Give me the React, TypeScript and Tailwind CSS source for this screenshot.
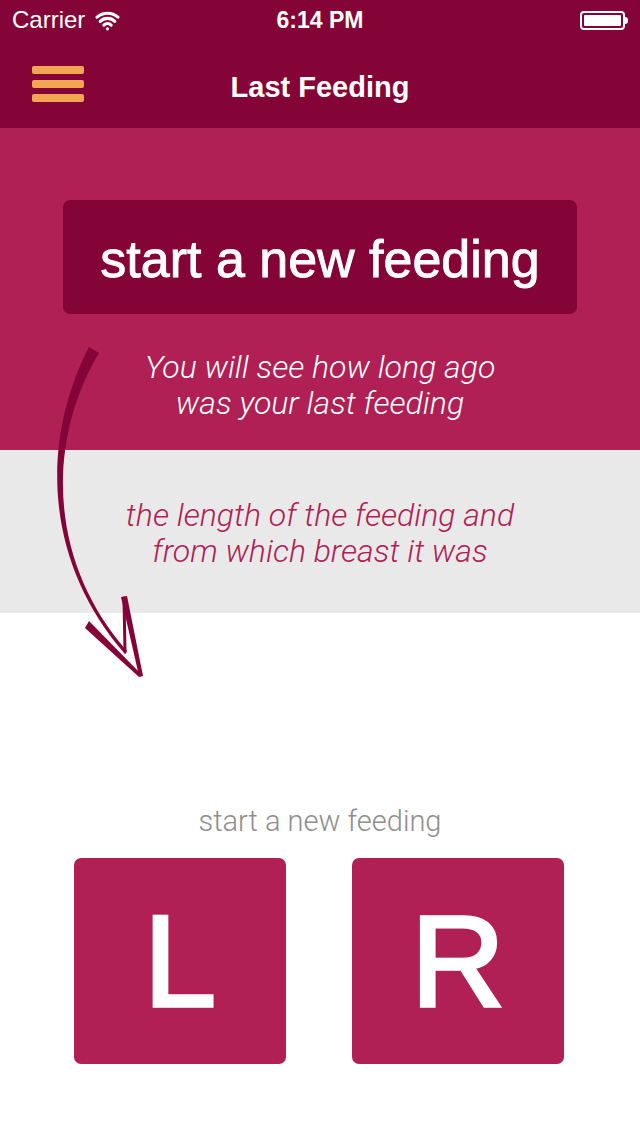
import { Wifi } from 'lucide-react';

function Arrow() {
  return (
    <svg className="absolute left-0 top-0 pointer-events-none" width="200" height="700" viewBox="0 0 200 700">
      {/* tapered shaft */}
      <path d="M89 347 C41 440 43 560 125 654 L127 651 C47 560 47 440 99 353 Z" fill="#840438" />
      {/* hand drawn head */}
      <path d="M125 652 L124 598" fill="none" stroke="#840438" strokeWidth="3" strokeLinecap="round" />
      <path d="M121 597 L127 596 L143 676 L139 676 Z" fill="#840438" />
      <path d="M85 628 L89 621 L143 676 L139 677 Z" fill="#840438" />
    </svg>
  );
}

export default function App() {
  return (
    <div className="relative w-[640px] h-[1136px] bg-white overflow-hidden font-['Liberation_Sans',Arial,sans-serif]">
      {/* status + nav */}
      <div className="bg-[#840438] text-white">
        <div className="h-10 flex items-center justify-between px-3 relative">
          <div className="flex items-center gap-[10px] text-[24px]">
            <span>Carrier</span>
            <Wifi size={25} strokeWidth={3} />
          </div>
          <span className="absolute left-1/2 -translate-x-1/2 text-[23px] font-bold">6:14 PM</span>
          <div className="flex items-center">
            <div className="w-[45px] h-[19px] border-2 border-white rounded-[4px] p-[2px]">
              <div className="w-full h-full bg-white rounded-[1px]" />
            </div>
            <div className="w-[3px] h-[7px] bg-white rounded-r-sm" />
          </div>
        </div>
        <div className="h-[88px] flex items-center relative px-8">
          <div className="flex flex-col gap-[6px]">
            <div className="w-[52px] h-[8px] rounded-[2px] bg-[#f2a553]" />
            <div className="w-[52px] h-[8px] rounded-[2px] bg-[#f2a553]" />
            <div className="w-[52px] h-[8px] rounded-[2px] bg-[#f2a553]" />
          </div>
          <span className="absolute left-1/2 top-[33px] -translate-x-1/2 text-[29px] leading-none font-bold">Last Feeding</span>
        </div>
      </div>

      {/* pink intro */}
      <div className="bg-[#b02055] h-[322px] pt-[72px] flex flex-col items-center">
        <div className="w-[514px] h-[114px] bg-[#840438] rounded-[7px] flex items-center justify-center text-white text-[52px] leading-none pt-1 [-webkit-text-stroke:0.9px_white]">
          start a new feeding
        </div>
        <p className="mt-[35px] text-center text-white italic font-light text-[32px] leading-[36px] font-['Roboto',sans-serif]">
          You will see how long ago<br />was your last feeding
        </p>
      </div>

      {/* gray info */}
      <div className="bg-[#e9e9e9] h-[163px] pt-[47px]">
        <p className="text-center text-[#b02055] italic font-light text-[32px] leading-[36px] font-['Roboto',sans-serif]">
          the length of the feeding and<br />from which breast it was
        </p>
      </div>

      {/* new feeding */}
      <div className="pt-[190px] flex flex-col items-center">
        <p className="text-[#8e8e8e] text-[29px] leading-[36px] font-light font-['Roboto',sans-serif]">start a new feeding</p>
        <div className="mt-[19px] flex gap-[66px] -translate-x-px">
          <button className="w-[212px] h-[206px] bg-[#b02055] rounded-[7px] text-white text-[130px] leading-none flex items-center justify-center [-webkit-text-stroke:3.5px_white]">L</button>
          <button className="w-[212px] h-[206px] bg-[#b02055] rounded-[7px] text-white text-[130px] leading-none flex items-center justify-center [-webkit-text-stroke:3.5px_white]">R</button>
        </div>
      </div>

      <Arrow />
    </div>
  );
}
